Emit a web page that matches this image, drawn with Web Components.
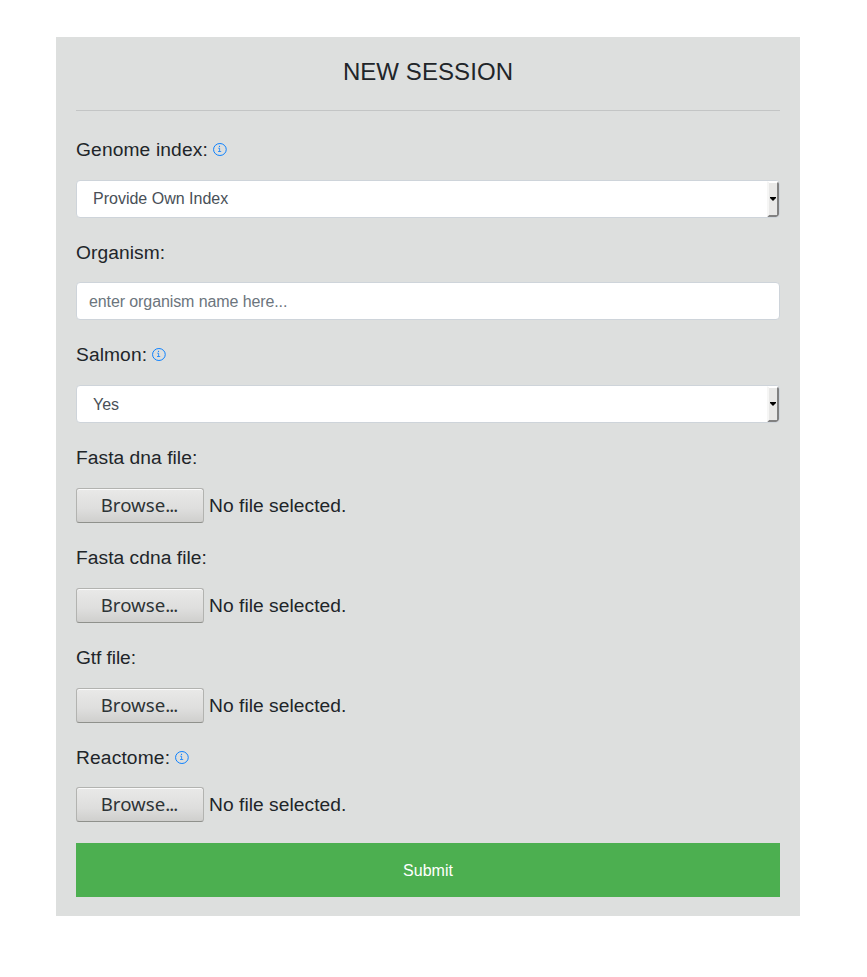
<!DOCTYPE html>
<html lang="en">
<head>
<meta charset="utf-8">
<title>New Session</title>
<style>
body{margin:0;background:#fff;font-family:"Liberation Sans",Arial,sans-serif;color:#212529}
</style>
</head>
<body>
<session-panel heading="NEW SESSION">
  <form-field label="Genome index:" info style="--tracking:.14px"><select-box>Provide Own Index</select-box></form-field>
  <form-field label="Organism:" style="--tracking:.08px"><text-box placeholder="enter organism name here..."></text-box></form-field>
  <form-field label="Salmon:" info style="--tracking:.1px;--label-drop:1.2px;--icon-drop:0px"><select-box style="--shift:1px">Yes</select-box></form-field>
  <form-field label="Fasta dna file:"><file-picker></file-picker></form-field>
  <form-field label="Fasta cdna file:"><file-picker></file-picker></form-field>
  <form-field label="Gtf file:" style="--tracking:-.1px"><file-picker></file-picker></form-field>
  <form-field label="Reactome:" info style="--tracking:.15px"><file-picker></file-picker></form-field>
  <submit-button>Submit</submit-button>
</session-panel>
<script>
const component = (name, render) => customElements.define(name, class extends HTMLElement {
  constructor() { super(); this.attachShadow({mode: 'open'}); }
  connectedCallback() { this.shadowRoot.innerHTML = render(this); }
});

component('session-panel', el => `
<style>
:host{display:block;box-sizing:border-box;width:744px;height:879px;margin:37px 0 0 56px;padding:20px;background:#dddfde}
h1{margin:0;font-size:24px;font-weight:400;line-height:29px;text-align:center;letter-spacing:.08px}
hr{margin:24px 0 23.8px;border:0;border-top:1px solid #c3c5c5}
.fields{display:flex;flex-direction:column;gap:19.98px}
</style>
<h1>${el.getAttribute('heading')}</h1><hr><div class="fields"><slot></slot></div>`);

component('form-field', el => `
<style>
:host{display:grid;row-gap:16px}
.label{display:flex;align-items:center;gap:5px;height:28.8px;font-size:19.2px;line-height:28.8px;letter-spacing:var(--tracking,.05px)}
.label span{padding-top:var(--label-drop,2.6px)}
</style>
<div class="label"><span>${el.getAttribute('label')}</span>${el.hasAttribute('info') ? '<info-icon></info-icon>' : ''}</div><slot></slot>`);

component('info-icon', () => `
<style>:host{display:block;width:14px;height:13px;margin-top:var(--icon-drop,1px)}svg{display:block}</style>
<svg width="14" height="13" viewBox="0 0 14 13" fill="none" stroke="#007bff">
<ellipse cx="6.9" cy="6.5" rx="6.35" ry="6" stroke-width=".95"/>
<path d="M5.2 5.2h1.4v3.3M5 8.5h3.2" stroke-width=".75"/><path d="M6.5 2.8v1.1" stroke-width="1.1"/>
</svg>`);

component('select-box', () => `
<style>
:host{display:flex;box-sizing:border-box;height:38px;padding-left:16px;justify-content:space-between;overflow:hidden;background:#fff;border:1px solid #ced4da;border-radius:4px;color:#495057;font-size:16px;line-height:36px}
.value{padding-top:var(--shift,0)}
.arrow{display:grid;place-items:center;box-sizing:border-box;width:12px;height:36px;background:#e8e8e7;border:2px solid;border-color:#fff #818181 #818181 #f6f6f5;border-radius:0 3px 3px 0}
svg{display:block}
</style>
<span class="value"><slot></slot></span><span class="arrow"><svg width="6" height="4" viewBox="0 0 6 4"><path d="M0 0h6v1L3 4 0 1z" fill="#000"/></svg></span>`);

component('text-box', el => `
<style>
:host{display:block}
input{display:block;box-sizing:border-box;width:100%;height:38px;margin:0;padding:2px 12px 0;background:#fff;border:1px solid #ced4da;border-radius:4px;font:16px "Liberation Sans",Arial,sans-serif;letter-spacing:-.1px;color:#495057}
input::placeholder{color:#6c757d;opacity:1}
</style>
<input placeholder="${el.getAttribute('placeholder')}">`);

component('file-picker', () => `
<style>
:host{display:flex;gap:5px;height:35.1px;font-size:19.2px;line-height:35px;letter-spacing:.05px}
button{box-sizing:border-box;width:128px;height:35px;margin:0;padding:0 2px 2px 0;border:1px solid #b2b3b0;border-bottom-color:#8f918c;border-radius:3px;background:linear-gradient(#e9e9e8,#dededd 60%,#cfcfcd);box-shadow:inset 0 1px #fafafa;font:18.67px/31px "Noto Sans",sans-serif;color:#2e3436}
.dots{letter-spacing:-.95px}
</style>
<button type="button">Browse<span class="dots">...</span></button><span>No file selected.</span>`);

component('submit-button', () => `
<style>
:host{display:block}
button{display:block;width:100%;height:54px;margin:0;padding:1px 0 0;border:0;background:#4caf50;color:#fff;font:16px/53px "Liberation Sans",Arial,sans-serif}
</style>
<button type="button"><slot></slot></button>`);
</script>
</body>
</html>
